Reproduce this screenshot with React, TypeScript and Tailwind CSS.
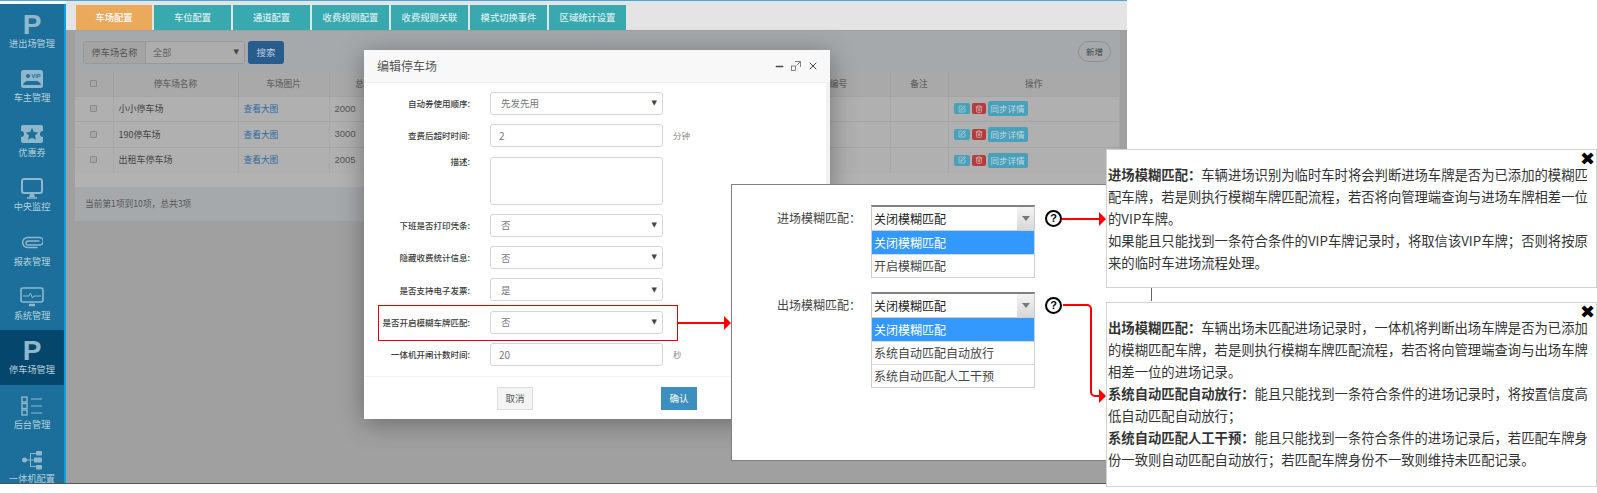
import { Minus, X, SquarePen, Trash2 } from "lucide-react";
import type { ReactNode } from "react";

function PIcon() {
  return <span className="text-[28px] leading-[26px] font-bold text-[#8fb8cd] font-['Liberation_Sans',sans-serif]">P</span>;
}

function VipIcon() {
  return (
    <svg viewBox="0 0 22 18" className="w-[22px] h-[18px]">
      <rect width="22" height="18" rx="2.5" fill="#8fb8cd" />
      <circle cx="7" cy="6" r="2" fill="#1c6f9a" />
      <path d="M2 15c1-3 3-4 5-4h8c2 0 4 1 5 4z" fill="#1c6f9a" />
      <text x="10.5" y="8" fontSize="5.5" fontWeight="700" fill="#1c6f9a" fontFamily="Liberation Sans, sans-serif">VIP</text>
    </svg>
  );
}

function TicketIcon() {
  return (
    <svg viewBox="0 0 22 18" className="w-[22px] h-[18px]">
      <path d="M2 0h18a2 2 0 0 1 2 2v4a3 3 0 0 0 0 6v4a2 2 0 0 1-2 2H2a2 2 0 0 1-2-2v-4a3 3 0 0 0 0-6V2a2 2 0 0 1 2-2z" fill="#8fb8cd" />
      <path d="M11 3l1.9 3.9 4.3.6-3.1 3 .7 4.3-3.8-2-3.8 2 .7-4.3-3.1-3 4.3-.6z" fill="#1c6f9a" />
    </svg>
  );
}

function MonitorIcon() {
  return (
    <svg viewBox="0 0 22 21" className="w-[22px] h-[21px]" fill="none" stroke="#8fb8cd">
      <rect x="1" y="1" width="20" height="14" rx="2" strokeWidth="2" />
      <path d="M9 16h4l1 3H8z" fill="#8fb8cd" stroke="none" />
      <path d="M6 20h10" strokeWidth="1.5" />
    </svg>
  );
}

function ClipIcon() {
  return (
    <svg viewBox="0 0 21 13" className="w-[21px] h-[13px]" fill="none" stroke="#8fb8cd" strokeWidth="1.5" strokeLinecap="round">
      <path d="M17 5H6a2 2 0 0 0 0 4h11.5a2.7 2.7 0 0 0 0-7.4H5.5a4.7 4.7 0 0 0 0 9.8H15" />
    </svg>
  );
}

function SystemIcon() {
  return (
    <svg viewBox="0 0 24 20" className="w-[24px] h-[20px]" fill="none" stroke="#8fb8cd">
      <rect x="1" y="1" width="22" height="14" rx="2" strokeWidth="1.6" />
      <path d="M3 9h6l1.5-3 2 5 1.5-2h7" strokeWidth="1" />
      <path d="M9 18h6" strokeWidth="2.5" />
    </svg>
  );
}

function ListIcon() {
  return (
    <svg viewBox="0 0 22 20" className="w-[22px] h-[20px]" fill="none" stroke="#8fb8cd">
      <rect x="1" y="1" width="5" height="5" strokeWidth="1.4" />
      <rect x="1" y="7.5" width="5" height="5" strokeWidth="1.4" />
      <rect x="1" y="14" width="5" height="5" strokeWidth="1.4" />
      <path d="M10 3h11M10 10h11M10 17h11" strokeWidth="1.2" />
    </svg>
  );
}

function TreeIcon() {
  return (
    <svg viewBox="0 0 20 20" className="w-[20px] h-[20px]" fill="#8fb8cd">
      <circle cx="2.5" cy="10" r="2.5" />
      <rect x="14" y="1" width="6" height="4.5" rx="1" />
      <rect x="12" y="7.5" width="8" height="5" rx="1" />
      <rect x="14" y="15" width="6" height="4.5" rx="1" />
      <path d="M4 9.4h4V3h6v1H9v5.4h3v1.2H9V16h5v1H8v-6.4H4z" />
    </svg>
  );
}

const menu: { label: string; icon: ReactNode; active?: boolean }[] = [
  { label: "进出场管理", icon: <PIcon /> },
  { label: "车主管理", icon: <VipIcon /> },
  { label: "优惠券", icon: <TicketIcon /> },
  { label: "中央监控", icon: <MonitorIcon /> },
  { label: "报表管理", icon: <ClipIcon /> },
  { label: "系统管理", icon: <SystemIcon /> },
  { label: "停车场管理", icon: <PIcon />, active: true },
  { label: "后台管理", icon: <ListIcon /> },
  { label: "一体机配置", icon: <TreeIcon /> },
];

const tabs = ["车场配置", "车位配置", "通道配置", "收费规则配置", "收费规则关联", "模式切换事件", "区域统计设置"];

const rows = [
  { name: "小小停车场", total: "2000" },
  { name: "190停车场", total: "3000" },
  { name: "出租车停车场", total: "2005" },
];

function Caret() {
  return <span className="text-[7px] text-[#444] font-['DejaVu_Sans',sans-serif]">▼</span>;
}

function FormRow({ label, children, suffix, tall }: { label: string; children: ReactNode; suffix?: string; tall?: boolean }) {
  return (
    <div className={`flex ${tall ? "h-[48px] items-start" : "h-[23px] items-center"}`}>
      <div className={`w-[106px] text-right text-[8.5px] font-medium text-[#3a3a3a] ${tall ? "-mt-[2px]" : ""}`}>{label}</div>
      <div className="ml-[20px] w-[173px] h-full">{children}</div>
      {suffix && <div className="ml-[10px] text-[8.5px] text-[#888]">{suffix}</div>}
    </div>
  );
}

function FakeSelect({ value }: { value: string }) {
  return (
    <div className="h-full flex items-center justify-between pl-[10px] pr-[5px] border border-[#d5d5d5] rounded-[3px] text-[9.5px] text-[#777]">
      <span>{value}</span>
      <Caret />
    </div>
  );
}

function FakeInput({ value }: { value: string }) {
  return <div className="h-full flex items-center pl-[8px] border border-[#d5d5d5] rounded-[3px] text-[10px] text-[#777]">{value}</div>;
}

function Combo({ label, options }: { label: string; options: string[] }) {
  return (
    <div className="flex items-start">
      <div className="w-[129px] h-[25px] flex items-center justify-end text-[12px] text-[#444]">{label}</div>
      <div className="ml-[10px] w-[164px]">
        <div className="h-[25px] flex items-center justify-between border-t-2 border-x border-[#808080] border-x-[#c8c8c8] bg-white text-[12px] text-[#222]">
          <span className="pl-[2px]">{options[0]}</span>
          <span className="w-[17px] h-full flex items-center justify-center bg-gradient-to-b from-[#f4f4f4] to-[#d8d8d8]">
            <span className="w-0 h-0 border-x-[4px] border-x-transparent border-t-[5px] border-t-[#777]" />
          </span>
        </div>
        <div className="border border-[#cfcfcf] text-[12px] text-[#444]">
          {options.map((o, i) => (
            <div key={o} className={`h-[23px] flex items-center pl-[2px] ${i === 0 ? "bg-[#3399ff] text-white" : "border-t border-[#d8d8d8]"}`}>
              {o}
            </div>
          ))}
        </div>
      </div>
      <div className="ml-[10px] mt-[5px] w-[17px] h-[17px] rounded-full border-2 border-black flex items-center justify-center text-[11px] font-bold text-black font-['Liberation_Sans',sans-serif]">
        ?
      </div>
    </div>
  );
}

function Callout({ className, children }: { className: string; children: ReactNode }) {
  return (
    <div className={`relative bg-white border border-[#d2d2d2] pl-[1px] pr-[8px] text-[13.33px] leading-[22px] text-[#333] ${className}`}>
      <span className="absolute right-[1px] top-[0px] text-[18px] leading-[18px] text-black font-['DejaVu_Sans',sans-serif]">✖</span>
      {children}
    </div>
  );
}

export default function App() {
  return (
    <div className="relative w-[1597px] h-[493px] overflow-hidden bg-white font-['Noto_Sans_CJK_SC','Noto_Sans',sans-serif]">
      <div className="w-[1127px] h-[484px] flex flex-col border-t border-[#4aa8d8] border-b border-b-[#555]">
        <div className="flex flex-1 min-h-0">
          {/* Side menu */}
          <aside className="w-[66px] mt-[3px] bg-[#1c6f9a] border-r-2 border-[#0ea0dd] overflow-hidden">
            {menu.map((m) => (
              <div key={m.label} className={`h-[54.4px] flex flex-col items-center pt-[8px] ${m.active ? "bg-[#05466c]" : ""}`}>
                <div className="h-[26px] flex items-center justify-center">{m.icon}</div>
                <div className="-mt-[2px] text-[9.2px] leading-[14px] text-[#b4cfdd]">{m.label}</div>
              </div>
            ))}
          </aside>

          <main className="flex-1 flex flex-col bg-[#a0a0a0]">
            {/* Tabs */}
            <div className="h-[29px] pt-[4px] pl-[10px] bg-[#e4e4e4] flex gap-[2px]">
              {tabs.map((t, i) => (
                <div key={t} className={`h-[25px] flex items-center justify-center text-[9.3px] font-medium text-[#d8eeee] ${i === 0 ? "w-[76px] bg-[#eba95c] text-white" : "w-[77px] bg-[#38a9ae]"}`}>
                  {t}
                </div>
              ))}
            </div>

            {/* Parking list */}
            <div className="ml-[9px] mr-[7px] mt-[1px] bg-[#a6a9ac]">
              <div className="h-[41px] pl-[8px] pr-[9px] pt-[10px] flex items-start">
                <div className="flex h-[23px] rounded-[3px] border border-[#999] overflow-hidden text-[9.2px]">
                  <div className="w-[62px] flex items-center justify-center bg-[#a4a4a4] border-r border-[#999] text-[#555]">停车场名称</div>
                  <div className="w-[98px] flex items-center justify-between pl-[7px] pr-[5px] bg-[#adadad] text-[#666]">
                    <span>全部</span>
                    <Caret />
                  </div>
                </div>
                <div className="ml-[3px] w-[36px] h-[23px] flex items-center justify-center rounded-[3px] bg-[#285c8c] text-[9.5px] text-[#b8cbdc]">搜索</div>
                <div className="ml-auto w-[33px] h-[21px] flex items-center justify-center rounded-full border border-[#8e8e8e] text-[8.5px] text-[#444]">新增</div>
              </div>

              <table className="w-[1044px] table-fixed border-collapse text-[8.7px] text-[#555]">
                <thead>
                  <tr className="h-[24px] bg-[#a9a9a9] text-[#666]">
                    <th className="w-[38px] font-medium border-r border-[#a2a2a2]">
                      <span className="inline-block w-[7px] h-[7px] border border-[#8a8a8a] bg-[#a6a6a6] rounded-[1px]" />
                    </th>
                    <th className="w-[125px] font-medium border-r border-[#a2a2a2]">停车场名称</th>
                    <th className="w-[91px] font-medium border-r border-[#a2a2a2]">车场图片</th>
                    <th className="w-[78px] font-medium">总车位</th>
                    <th className="w-[363px]" />
                    <th className="w-[120px] font-medium border-r border-[#a2a2a2]">车场编号</th>
                    <th className="w-[58px] font-medium border-r border-[#a2a2a2]">备注</th>
                    <th className="w-[171px] font-medium">操作</th>
                  </tr>
                </thead>
                <tbody>
                  {rows.map((r) => (
                    <tr key={r.name} className="h-[25.5px] bg-[#b0b0b0] border-t border-[#a4a4a4]">
                      <td className="text-center border-r border-[#a8a8a8]">
                        <span className="inline-block w-[7px] h-[7px] border border-[#8a8a8a] bg-[#a6a6a6] rounded-[1px]" />
                      </td>
                      <td className="pl-[5px] text-[9px] text-[#444] border-r border-[#a8a8a8]">{r.name}</td>
                      <td className="pl-[5px] text-[#2c6aa0] border-r border-[#a8a8a8]">查看大图</td>
                      <td className="pl-[5px] text-[9.5px] font-['Liberation_Sans',sans-serif]">{r.total}</td>
                      <td />
                      <td className="border-r border-[#a8a8a8]" />
                      <td className="border-r border-[#a8a8a8]" />
                      <td className="pl-[5px]">
                        <div className="flex items-center gap-[2px]">
                          <span className="w-[16px] h-[11px] flex items-center justify-center rounded-[2px] bg-[#4a9fb9]">
                            <SquarePen className="w-[8px] h-[8px] text-[#c4dbe4]" />
                          </span>
                          <span className="w-[14px] h-[11px] flex items-center justify-center rounded-[2px] bg-[#b33d3d]">
                            <Trash2 className="w-[8px] h-[8px] text-[#e6c4c4]" />
                          </span>
                          <span className="w-[40px] h-[15px] flex items-center justify-center rounded-[2px] bg-[#4a9fb9] text-[8.5px] text-[#c0dbe4]">同步详情</span>
                        </div>
                      </td>
                    </tr>
                  ))}
                </tbody>
              </table>
              <div className="h-[14px] bg-[#b2b2b2]" />
              <div className="h-[34px] pl-[10px] flex items-center text-[8.7px] text-[#555]">当前第1项到10项，总共3项</div>
            </div>
          </main>
        </div>
      </div>

      {/* Edit dialog */}
      <div className="absolute left-[364px] top-[50px] w-[466px] h-[369px] bg-white flex flex-col shadow-[0_4px_24px_rgba(0,0,0,0.35)]">
        <div className="h-[33px] shrink-0 flex items-center justify-between pl-[13px] pr-[11px] bg-[#f8f8f8] border-b border-[#eee]">
          <span className="text-[12px] text-[#555]">编辑停车场</span>
          <span className="flex items-center gap-[6px] text-[#444]">
            <Minus className="w-[11px] h-[11px]" strokeWidth={3} />
            <svg viewBox="0 0 10 10" className="w-[10px] h-[10px]" fill="none" stroke="#666" strokeWidth="0.8">
              <path d="M4 .5H9.5V6M9.5.5 5.5 4.5" />
              <rect x=".5" y="5" width="4" height="4.5" />
            </svg>
            <X className="w-[12px] h-[12px]" />
          </span>
        </div>
        <div className="flex-1 flex flex-col gap-[9.3px] pt-[9px] border-r-4 border-[#f2f2f2]">
          <FormRow label="自动券使用顺序:"><FakeSelect value="先发先用" /></FormRow>
          <FormRow label="查费后超时时间:" suffix="分钟"><FakeInput value="2" /></FormRow>
          <FormRow label="描述:" tall>
            <div className="h-full border border-[#d5d5d5] rounded-[3px]" />
          </FormRow>
          <FormRow label="下班是否打印凭条:"><FakeSelect value="否" /></FormRow>
          <FormRow label="隐藏收费统计信息:"><FakeSelect value="否" /></FormRow>
          <FormRow label="是否支持电子发票:"><FakeSelect value="是" /></FormRow>
          <FormRow label="是否开启模糊车牌匹配:"><FakeSelect value="否" /></FormRow>
          <FormRow label="一体机开闸计数时间:" suffix="秒"><FakeInput value="20" /></FormRow>
        </div>
        <div className="h-[43px] shrink-0 flex items-start pt-[10px] pl-[133px] border-t border-[#f2f2f2]">
          <div className="w-[36px] h-[23px] flex items-center justify-center bg-[#f4f4f4] border border-[#ddd] text-[9.5px] text-[#555]">取消</div>
          <div className="ml-[128px] w-[36px] h-[23px] flex items-center justify-center bg-[#3d8fc0] text-[9.5px] text-white">确认</div>
        </div>
      </div>

      {/* Annotation: highlighted row */}
      <div className="absolute left-[378px] top-[305px] w-[300px] h-[36px] border border-[#e60000]" />

      {/* Annotation: zoomed settings */}
      <div className="absolute left-[731px] top-[184px] w-[376px] h-[277px] bg-white border border-[#808080] pt-[20px] flex flex-col gap-[14px]">
        <Combo label="进场模糊匹配：" options={["关闭模糊匹配", "开启模糊匹配"]} />
        <Combo label="出场模糊匹配：" options={["关闭模糊匹配", "系统自动匹配自动放行", "系统自动匹配人工干预"]} />
      </div>

      {/* Annotation: explanations */}
      <div className="absolute left-[1106px] top-[149px] w-[491px] bg-white flex flex-col gap-[14px]">
        <Callout className="h-[139px] pt-[14px]">
          <p><b>进场模糊匹配：</b>车辆进场识别为临时车时将会判断进场车牌是否为已添加的模糊匹配车牌，若是则执行模糊车牌匹配流程，若否将向管理端查询与进场车牌相差一位的VIP车牌。</p>
          <p>如果能且只能找到一条符合条件的VIP车牌记录时，将取信该VIP车牌；否则将按原来的临时车进场流程处理。</p>
        </Callout>
        <Callout className="h-[185px] pt-[14px]">
          <p><b>出场模糊匹配：</b>车辆出场未匹配进场记录时，一体机将判断出场车牌是否为已添加的模糊匹配车牌，若是则执行模糊车牌匹配流程，若否将向管理端查询与出场车牌相差一位的进场记录。</p>
          <p><b>系统自动匹配自动放行：</b>能且只能找到一条符合条件的进场记录时，将按置信度高低自动匹配自动放行；</p>
          <p><b>系统自动匹配人工干预：</b>能且只能找到一条符合条件的进场记录后，若匹配车牌身份一致则自动匹配自动放行；若匹配车牌身份不一致则维持未匹配记录。</p>
        </Callout>
      </div>

      {/* Red arrows and connector */}
      <svg className="absolute left-0 top-0 pointer-events-none" width="1597" height="493" fill="none">
        <path d="M678 323H725" stroke="#f00" strokeWidth="2" />
        <path d="M724 316l7 7-7 7z" fill="#f00" />
        <path d="M1062 219H1100" stroke="#f00" strokeWidth="2" />
        <path d="M1099 212l7 7-7 7z" fill="#f00" />
        <path d="M1063 305H1087a4 4 0 0 1 4 4V392a4 4 0 0 0 4 4H1100" stroke="#f00" strokeWidth="2" />
        <path d="M1099 389l7 7-7 7z" fill="#f00" />
        <path d="M1151.5 288V301" stroke="#666" />
      </svg>
    </div>
  );
}
